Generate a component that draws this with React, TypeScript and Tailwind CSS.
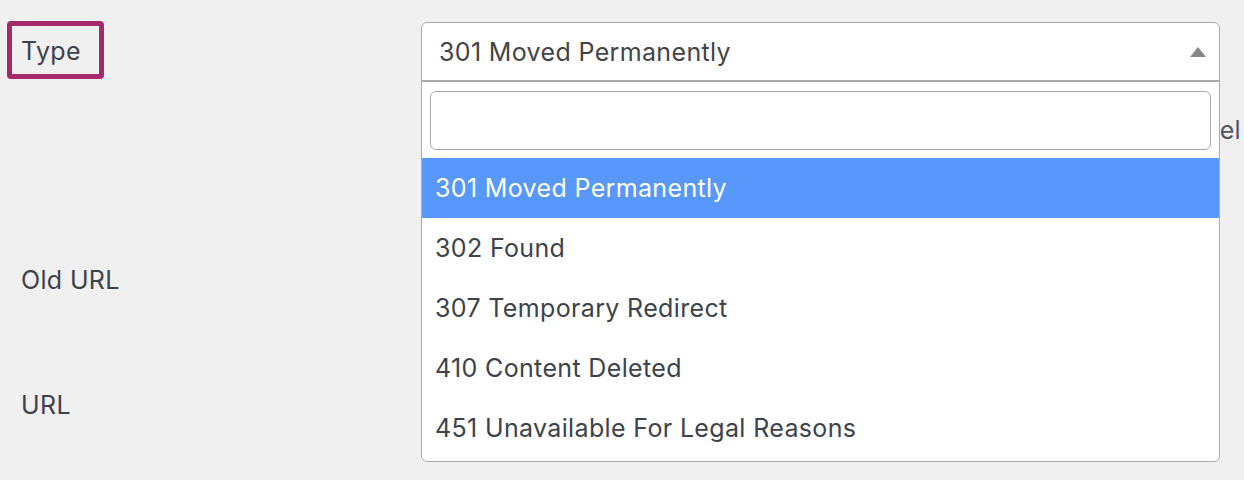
import { useState } from "react";

const options = [
  "301 Moved Permanently",
  "302 Found",
  "307 Temporary Redirect",
  "410 Content Deleted",
  "451 Unavailable For Legal Reasons",
];

function App() {
  const [selected] = useState(0);

  return (
    <div
      className="relative w-[1244px] h-[480px] overflow-hidden bg-[#f0f0f1] text-[#3c434a] text-[25px] tracking-[0.35px]"
      style={{ fontFamily: "Inter, 'Noto Sans', sans-serif" }}
    >
      {/* form rows */}
      <div className="flex">
        <div className="w-[421px] flex flex-col pl-[7px] pt-[21px]">
          <div className="w-[97px] h-[58px] border-[5px] border-[#a62a6b] rounded-[4px] pl-[9px] flex items-center pt-[2px] leading-[30px]">
            Type
          </div>
          <div className="pl-[14px] mt-[186px] leading-[30px]">Old URL</div>
          <div className="pl-[14px] mt-[95px] leading-[30px]">URL</div>
        </div>
        <div className="flex-1 flex justify-end pt-[115px] pr-[3px] leading-[30px] text-[#50575e]">
          Label
        </div>
      </div>

      {/* select2 style control, open */}
      <div className="absolute left-[421px] top-[22px] w-[799px] h-[440px] bg-white border-[1.5px] border-[#aaa] rounded-[6px] flex flex-col overflow-hidden">
        <div className="h-[59px] flex items-center justify-between pl-[17px] pr-[13px] border-b-[2px] border-[#aaa] text-[#444]">
          <span className="pt-[2px]">301 Moved Permanently</span>
          <svg width="16" height="10" viewBox="0 0 16 10">
            <path d="M0 10 L8 0 L16 10 Z" fill="#888" />
          </svg>
        </div>
        <div className="px-[8px] pt-[9px] pb-[8px]">
          <div className="h-[59px] border-[1.5px] border-[#aaa] rounded-[6px] bg-white" />
        </div>
        <div className="flex flex-col">
          {options.map((o, i) => (
            <div
              key={o}
              className={
                i === selected
                  ? "h-[60px] flex items-center pl-[13px] pt-[2px] bg-[#5897fb] text-white"
                  : "h-[60px] flex items-center pl-[13px] pt-[2px] text-[#3c434a]"
              }
            >
              {o}
            </div>
          ))}
        </div>
      </div>
    </div>
  );
}

export default App;
